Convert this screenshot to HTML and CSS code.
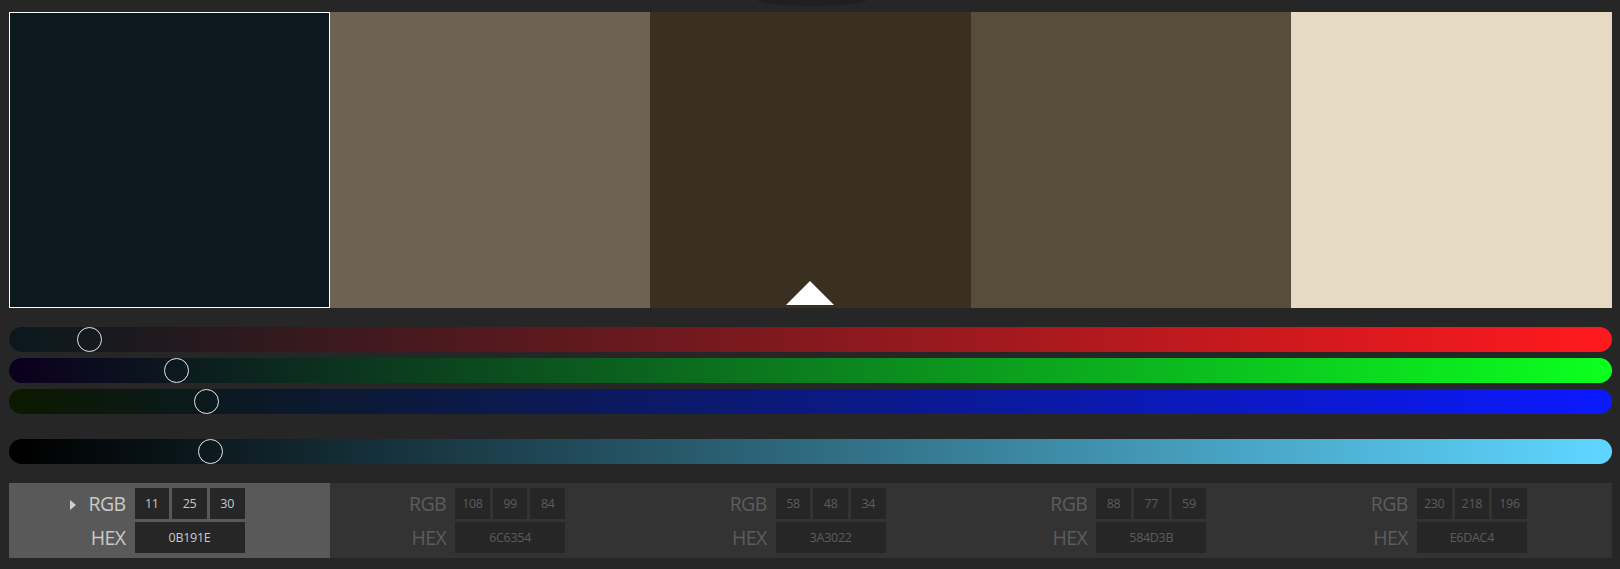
FILE: index.html
```html
<!DOCTYPE html>
<html>
<head>
<meta charset="utf-8">
<link rel="stylesheet" href="styles.css">
</head>
<body>
<div class="app">
  <div class="notch"></div>
  <div class="swatches">
    <div class="swatch active" style="background:#0B191E"></div>
    <div class="swatch" style="background:#6C6354"></div>
    <div class="swatch base" style="background:#3A3022"><span class="base-mark"></span></div>
    <div class="swatch" style="background:#584D3B"></div>
    <div class="swatch" style="background:#E6DAC4"></div>
  </div>

  <div class="sliders">
    <div class="track track-r"><span class="knob" style="left:68px"></span></div>
    <div class="track track-g"><span class="knob" style="left:155px"></span></div>
    <div class="track track-b"><span class="knob" style="left:185px"></span></div>
    <div class="track track-l"><span class="knob" style="left:189px"></span></div>
  </div>

  <div class="values">
    <div class="cell active">
      <div class="label"><span class="caret"></span>RGB</div>
      <div class="boxes"><span class="box">11</span><span class="box">25</span><span class="box">30</span></div>
      <div class="label">HEX</div>
      <div class="boxes"><span class="box hex">0B191E</span></div>
    </div>
    <div class="cell">
      <div class="label">RGB</div>
      <div class="boxes"><span class="box">108</span><span class="box">99</span><span class="box">84</span></div>
      <div class="label">HEX</div>
      <div class="boxes"><span class="box hex">6C6354</span></div>
    </div>
    <div class="cell">
      <div class="label">RGB</div>
      <div class="boxes"><span class="box">58</span><span class="box">48</span><span class="box">34</span></div>
      <div class="label">HEX</div>
      <div class="boxes"><span class="box hex">3A3022</span></div>
    </div>
    <div class="cell">
      <div class="label">RGB</div>
      <div class="boxes"><span class="box">88</span><span class="box">77</span><span class="box">59</span></div>
      <div class="label">HEX</div>
      <div class="boxes"><span class="box hex">584D3B</span></div>
    </div>
    <div class="cell">
      <div class="label">RGB</div>
      <div class="boxes"><span class="box">230</span><span class="box">218</span><span class="box">196</span></div>
      <div class="label">HEX</div>
      <div class="boxes"><span class="box hex">E6DAC4</span></div>
    </div>
  </div>
</div>
</body>
</html>
```
FILE: styles.css
```css
html, body {
  margin: 0;
  padding: 0;
  background: #262626;
  font-family: "Open Sans", "Noto Sans", sans-serif;
}

.app {
  position: relative;
  width: 1603px;
  padding: 12px 8px 11px 9px;
}

.notch {
  position: absolute;
  top: -7px;
  left: 757px;
  width: 110px;
  height: 13px;
  border-radius: 50%;
  background: #1f1f1f;
  filter: blur(0.6px);
}

.swatches {
  display: flex;
  height: 296px;
}

.swatch {
  flex: 1;
  position: relative;
}

.swatch.active {
  box-shadow: inset 0 0 0 1px #ffffff;
}

.base-mark {
  position: absolute;
  left: 50%;
  bottom: 3px;
  margin-left: -24.5px;
  width: 0;
  height: 0;
  border-left: 24.5px solid transparent;
  border-right: 24.5px solid transparent;
  border-bottom: 24px solid #ffffff;
}

.sliders {
  display: flex;
  flex-direction: column;
  gap: 6px;
  margin-top: 19px;
}

.track {
  position: relative;
  height: 25px;
  border-radius: 12.5px;
}

.track-r { background: linear-gradient(to right, #0b191e 12px, #ff191e calc(100% - 12px)); }
.track-g { background: linear-gradient(to right, #0b001e 12px, #0bff1e calc(100% - 12px)); }
.track-b { background: linear-gradient(to right, #0b1900 12px, #0b19ff calc(100% - 12px)); }
.track-l {
  margin-top: 19px;
  background: linear-gradient(to right, #000000 12px, #5ed5ff calc(100% - 12px));
}

.knob {
  position: absolute;
  top: 0;
  width: 25px;
  height: 25px;
  box-sizing: border-box;
  border-radius: 50%;
  border: 1.5px solid #e6e6e6;
}

.values {
  display: flex;
  margin-top: 19px;
  height: 75px;
}

.cell {
  flex: 1;
  display: grid;
  grid-template-columns: 116.5px 110px;
  grid-template-rows: 31px 31px;
  column-gap: 9px;
  row-gap: 3px;
  padding: 5px 0;
  box-sizing: border-box;
  background: #333333;
  color: #5c5c5c;
}

.cell.active {
  background: #595959;
  color: #c9c9c9;
}

.label {
  display: flex;
  align-items: center;
  justify-content: flex-end;
  font-size: 19.5px;
  line-height: 31px;
  letter-spacing: -0.6px;
}

.caret {
  width: 0;
  height: 0;
  border-left: 6px solid #d0d0d0;
  border-top: 5px solid transparent;
  border-bottom: 5px solid transparent;
  margin-right: 12px;
  margin-top: 3px;
}

.boxes {
  display: grid;
  grid-auto-flow: column;
  grid-auto-columns: 1fr;
  column-gap: 3px;
}

.box {
  display: flex;
  align-items: center;
  justify-content: center;
  background: #262626;
  font-size: 12.5px;
  letter-spacing: -0.3px;
}
```
